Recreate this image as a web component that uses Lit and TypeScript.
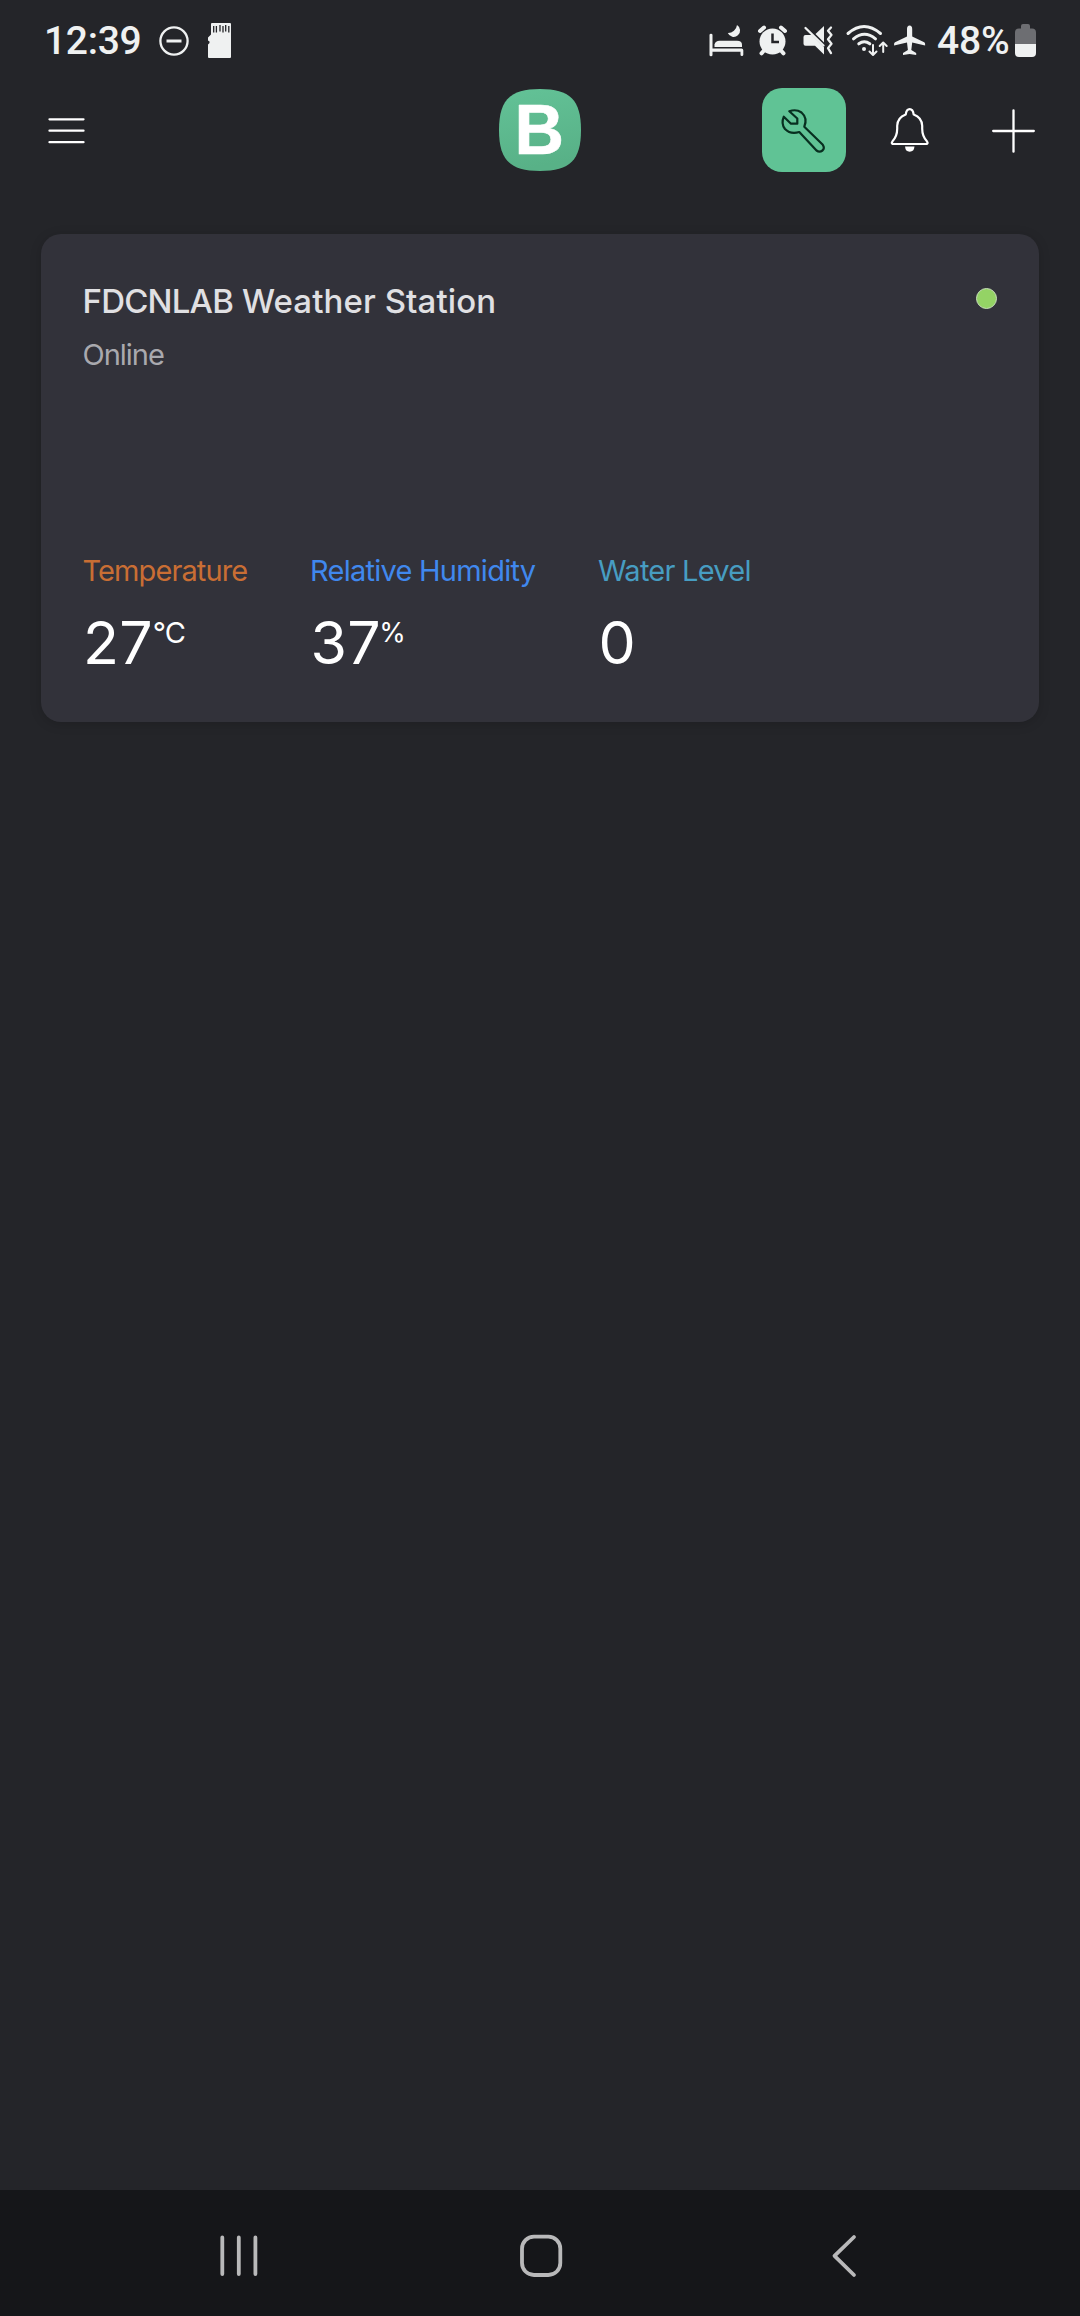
import { LitElement, html, css, svg } from "lit";
import { customElement, property } from "lit/decorators.js";

interface Reading {
  label: string;
  value: string;
  unit: string;
  tone: string;
}

const readings: Reading[] = [
  { label: "Temperature", value: "27", unit: "°C", tone: "temperature" },
  { label: "Relative Humidity", value: "37", unit: "%", tone: "humidity" },
  { label: "Water Level", value: "0", unit: "", tone: "water" },
];

@customElement("status-bar")
export class StatusBar extends LitElement {
  static styles = css`
    :host {
      display: flex;
      height: 80px;
      box-sizing: border-box;
      justify-content: space-between;
      color: #eff1f1;
      font: 500 39px/82px Roboto, sans-serif;
    }
    .side { display: flex; }
    .time { padding-left: 44px; width: 111px; letter-spacing: -0.3px; white-space: nowrap; }
    .percent { width: 74px; padding-left: 1px; letter-spacing: -0.2px; white-space: nowrap; }
    svg { display: block; fill: #eff1f1; }
    .line { fill: none; stroke: #eff1f1; stroke-linecap: round; stroke-linejoin: round; }
    .cut { fill: none; stroke: #242529; }
  `;
  render() {
    return html`
      <div class="side">
        <div class="time">12:39</div>
        <svg width="85" height="80" viewBox="155 0 85 80">
          <circle class="line" cx="174" cy="41" r="13.6" stroke-width="2.3" />
          <path d="M166.5 39.5h15v3h-15z" />
          <path d="M211 24q0-1 1-1h18q1 0 1 1v33q0 1-1 1h-21q-1 0-1-1V44.500l1.500-1.500v-1.500l-1.500-1v-3l3-3z" />
          <path class="cut" stroke-width="1.300" d="M213.700 26v6.500M216.400 26v6.500M220 25v6.500M223 26v6.500M225.700 25v6.500M228.800 26v6.500" />
        </svg>
      </div>
      <div class="side">
        <svg width="230" height="80" viewBox="706 0 230 80">
          <path d="M709.500 35q0-1.200 1.500-1.200t1.500 1.200v13.500h29q1.800 0 1.800 1.800v4.500q0 1.200-1.400 1.200t-1.400-1.200v-3h-28v3.200q0 1.200-1.500 1.200t-1.500-1.200z" />
          <path d="M714.500 47v-2.500q1-3.700 5-3.700h17.500q5 0 5 4v2.200z" />
          <path d="M737 25a6.400 6.400 0 1 1-9.200 8 9 9 0 0 0 9.200-8z" />
          <circle cx="772.500" cy="41.500" r="13" />
          <path class="line" stroke-width="4" d="M760 31l4-3.400M785 31l-4-3.400M764 50.500l-2.500 2.800M781 50.500l2.500 2.800" />
          <path class="cut" stroke-width="2.500" d="M772.500 33.500v8.500h6.500" />
          <path d="M805.500 35h6.200l12.300 12.300v7.200l-9-8.700h-9.500q-2 0-2-2v-6.800q0-2 2-2z" />
          <path d="M824 26v16.500l-8.500-8.500z" />
          <path class="line" stroke-width="2.300" d="M805.500 28l18 17.500" />
          <path class="line" stroke-width="2.300" d="M831 27.500l-3 3.200 3.500 4.200-3.500 4.400 3.500 4.400-3.500 4.400 3 5" />
          <path class="line" stroke-width="3" d="M848 33.500q16-14 32.500 0M853.500 38.800q11-9 22 0M858.800 43.800q5.500-4 11 0" />
          <circle cx="864" cy="49" r="2" />
          <path class="line" stroke-width="2" d="M873 45v9.500M869.500 51.500l3.500 3.500 3.500-3.500M883.200 52v-9M879.700 46l3.500-3.500 3.500 3.500" />
          <path d="M909.600 25.600q2.600 0 2.600 3.500v7.300l12 5.800q.9.500.9 1.500v1.700l-12.900-2.800-.9 7.300 4.900 3v2.100l-6.600-1.100-6.600 1.100v-2.100l4.900-3-.9-7.300-12.900 2.800v-1.700q0-1 .9-1.500l12-5.800v-7.300q0-3.500 2.600-3.500z" />
        </svg>
        <div class="percent">48%</div>
        <svg width="69" height="80" viewBox="1011 0 69 80">
          <path fill="#6d6e72" d="M1021 26q0-2 2-2h5q2 0 2 2v2.500h2q4 0 4 4v12h-21v-12q0-4 4-4h2z" />
          <path d="M1015 44h21v9q0 4-4 4h-13q-4 0-4-4z" />
        </svg>
      </div>
    `;
  }
}

@customElement("top-bar")
export class TopBar extends LitElement {
  static styles = css`
    :host {
      display: grid;
      grid-template-columns: 1fr 84px 1fr;
      align-items: center;
      height: 100px;
      padding: 0 32px;
    }
    svg { display: block; fill: none; stroke: #fff; stroke-linecap: round; stroke-linejoin: round; }
    .menu { margin-left: 10px; }
    .actions { display: flex; align-items: center; justify-content: flex-end; }
    .tool {
      display: flex;
      width: 84px;
      height: 84px;
      border-radius: 20px;
      background: #60c395;
    }
    .tool svg { stroke: #082f20; }
    .logo { stroke: none; }
    .letter { fill: #fff; stroke: #fff; stroke-width: 0.600px; font: 700 69.500px "Liberation Sans", Arial, sans-serif; }
  `;
  render() {
    return html`
      <svg class="menu" width="50" height="40" viewBox="42 110 50 40" stroke-width="2.300">
        <path d="M49.500 119.300h34M49.500 130.700h34M49.500 142.200h34" />
      </svg>
      <svg class="logo" width="84" height="84" viewBox="498 88 84 84">
        <defs>
          <linearGradient id="g" x1="0" y1="0" x2="0.200" y2="1">
            <stop offset="0" stop-color="#63c297" />
            <stop offset="1" stop-color="#58b187" />
          </linearGradient>
        </defs>
        <path fill="url(#g)" d="M540 89c30 0 41 11 41 41s-11 41-41 41-41-11-41-41 11-41 41-41z" />
        <text class="letter" x="514.500" y="153.600" textLength="49.500" lengthAdjust="spacingAndGlyphs">B</text>
      </svg>
      <div class="actions">
        <div class="tool">
          <svg width="84" height="84" viewBox="762 88 84 84" stroke-width="2.200">
            <path d="M789.300 111.300Q796 108.700 801.500 112.500Q807.800 118 804.300 126.700L822.800 144.800Q825 148 822.500 150.500Q819.500 152.700 816.500 150.500L799.300 132Q790.500 134.700 785 129Q780.800 123.500 783.800 116.700L791 123.700H797.300V118.500Z" />
          </svg>
        </div>
        <svg width="128" height="60" viewBox="846 100 128 60" stroke-width="2.200">
          <path d="M892.500 144q-1.300-1 0-2.700 4.700-5 4.700-12.500v-3q.3-8.300 8.500-11.300.8-5.300 4-5.300t4 5.300q8.200 3 8.500 11.300v3q0 7.500 4.700 12.500 1.300 1.700 0 2.700z" />
          <path fill="#fff" stroke="none" d="M905 146.500h9.500q-.5 5.200-4.800 5.200t-4.700-5.200z" />
        </svg>
        <svg width="74" height="60" viewBox="974 101 74 60" stroke-width="2.300">
          <path d="M993.200 132h40.600M1013.500 111.300v41.400" />
        </svg>
      </div>
    `;
  }
}

@customElement("device-card")
export class DeviceCard extends LitElement {
  @property({ attribute: false }) items: Reading[] = [];
  static styles = css`
    :host {
      display: flex;
      flex-direction: column;
      justify-content: space-between;
      box-sizing: border-box;
      height: 488px;
      margin: 54px 41px 0;
      padding: 44px 42px 44px 41.500px;
      border-radius: 20px;
      background: #32323a;
      box-shadow: 0 2px 12px rgba(0, 0, 0, 0.160);
      font-family: Inter, "Liberation Sans", sans-serif;
    }
    .head { display: flex; justify-content: space-between; }
    .name { color: #e0e0e3; font-size: 33px; line-height: 46px; font-weight: 500; letter-spacing: 0.100px; white-space: nowrap; }
    .code { letter-spacing: -0.800px; }
    .state { color: #a9a9ae; font-size: 29px; line-height: 40px; margin-top: 11px; letter-spacing: -1px; }
    .dot { box-sizing: border-box; width: 21px; height: 21px; margin-top: 10px; border-radius: 50%; background: #94d365; border: 1px solid #c8dfba; }
    .readings { display: grid; grid-template-columns: 227.500px 288px auto; }
    .label { font-size: 29px; line-height: 40px; letter-spacing: -0.900px; white-space: nowrap; }
    .temperature { color: #c96e34; }
    .humidity { color: #4088ee; letter-spacing: -0.750px; }
    .water { color: #479dc2; letter-spacing: -0.750px; }
    .value { display: flex; color: #fff; font-size: 59px; line-height: 70px; margin: 17px 0 0 0.500px; letter-spacing: 0.200px; }
    .unit { font-size: 29px; line-height: 40px; margin-top: 5px; letter-spacing: -0.800px; }
    .humidity + .value .unit { font-size: 27px; margin-left: -1.500px; }
  `;
  render() {
    return html`
      <div class="head">
        <div>
          <div class="name"><span class="code">FDCNLAB</span> Weather Station</div>
          <div class="state">Online</div>
        </div>
        <div class="dot"></div>
      </div>
      <div class="readings">
        ${this.items.map(
          (r) => html`<div>
            <div class="label ${r.tone}">${r.label}</div>
            <div class="value"><span>${r.value}</span><span class="unit">${r.unit}</span></div>
          </div>`
        )}
      </div>
    `;
  }
}

const navIcons = [
  svg`<path d="M22.300 23.500v36.500M38.800 23.500v36.500M55.400 23.500v36.500" />`,
  svg`<rect x="22" y="22.700" width="38.300" height="38.300" rx="12" />`,
  svg`<path d="M54 23L34.500 41.900 54 61" />`,
];

@customElement("nav-bar")
export class NavBar extends LitElement {
  static styles = css`
    :host {
      display: flex;
      gap: 220px;
      height: 126px;
      box-sizing: border-box;
      padding: 24px 0 0 200px;
      background: #151619;
    }
    svg { display: block; fill: none; stroke: #b9b9ba; stroke-width: 3.800; stroke-linecap: round; stroke-linejoin: round; }
  `;
  render() {
    return navIcons.map((icon) => html`<svg width="80" height="84" viewBox="0 0 80 84">${icon}</svg>`);
  }
}

@customElement("app-root")
export class AppRoot extends LitElement {
  static styles = css`
    :host {
      display: flex;
      flex-direction: column;
      width: 1080px;
      height: 2316px;
      background: #242529;
      overflow: hidden;
    }
    .content { flex: 1; display: flow-root; }
  `;
  render() {
    return html`
      <status-bar></status-bar>
      <top-bar></top-bar>
      <div class="content"><device-card .items=${readings}></device-card></div>
      <nav-bar></nav-bar>
    `;
  }
}
